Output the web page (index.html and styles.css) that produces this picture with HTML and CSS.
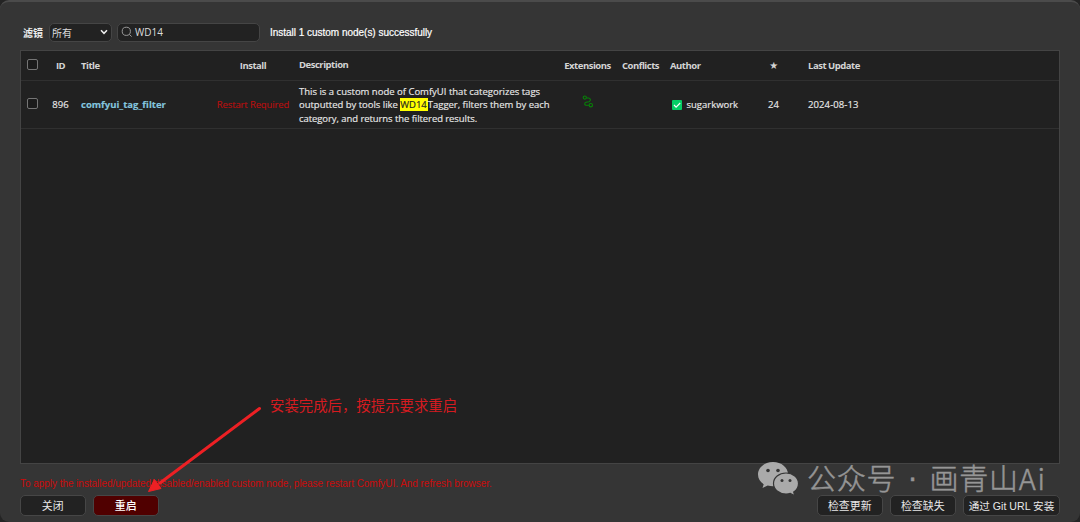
FILE: index.html
```html
<!DOCTYPE html>
<html lang="zh-CN">
<head>
<meta charset="utf-8">
<title>Custom Nodes Manager</title>
<link rel="stylesheet" href="styles.css">
</head>
<body>
<main class="dialog">
  <header class="toolbar">
    <label class="filter-label">滤镜</label>
    <div class="select"><span>所有</span><svg class="chevron" viewBox="0 0 8 6"><path d="M1 1.2 4 4.3 7 1.2"/></svg></div>
    <div class="search"><svg class="search-icon" viewBox="0 0 12 12"><circle cx="5.3" cy="5.3" r="4.1"/><path d="m8.3 8.3 2.3 2.3"/></svg><span>WD14</span></div>
    <div class="status">Install 1 custom node(s) successfully</div>
  </header>
  <section class="grid">
    <div class="row head">
      <div class="check"><i class="box"></i></div><div class="center">ID</div><div class="title">Title</div><div class="center">Install</div><div class="desc">Description</div><div class="center">Extensions</div><div class="center">Conflicts</div><div class="author-h">Author</div><div class="center star">★</div><div class="date">Last Update</div>
    </div>
    <div class="row item">
      <div class="check"><i class="box"></i></div><div class="center">896</div><div class="title link">comfyui_tag_filter</div><div class="center restart-req">Restart Required</div>
      <div class="desc"><p>This is a custom node of ComfyUI that categorizes tags</p><p class="mid">outputted by tools like <mark>WD14</mark>Tagger, filters them by each</p><p class="tight">category, and returns the filtered results.</p></div>
      <div class="center"><svg class="ext-icon" viewBox="0 0 12 13"><circle cx="2.8" cy="2.6" r="1.6"/><circle cx="8.8" cy="10.2" r="1.7"/><path d="M4.500 3h2.200c2 .3 2.300 2.900.3 3.700L4 7.300C2 8 2.500 10.400 4.300 10.300h2.600"/></svg></div>
      <div></div>
      <div class="author"><svg class="verified" viewBox="0 0 10 10"><rect width="10" height="10" rx="1"/><path d="m2 5 2.100 2.200L8.200 3"/></svg><span>sugarkwork</span></div>
      <div class="center">24</div><div class="date">2024-08-13</div>
    </div>
  </section>
  <div class="notice">To apply the installed/updated/disabled/enabled custom node, please restart ComfyUI. And refresh browser.</div>
  <footer class="actions">
    <button class="btn">关闭</button>
    <button class="btn danger">重启</button>
    <span class="spacer"></span>
    <button class="btn">检查更新</button>
    <button class="btn">检查缺失</button>
    <button class="btn git">通过 Git URL 安装</button>
  </footer>
</main>
<svg class="arrow" viewBox="0 0 116 90"><path class="shaft" d="M111.500 4.500 12 79"/><path class="tip" d="M.5 87.500 6.500 75.500 13 84.500Z"/></svg>
<div class="annotation">安装完成后，按提示要求重启</div>
<div class="watermark">
  <svg class="wechat" viewBox="0 0 42 34"><path d="M15 0C6.500 0 0 5.500 0 12.500c0 4 2.200 7.500 5.700 9.700L4.500 26l5.200-2.500c1.700.5 3.600.7 5.300.7C23.500 24.200 30 19 30 12.300S23.500 0 15 0Z"/><path class="front" d="M28 11c-7 0-12.500 4.600-12.500 10.500S21 32 28 32c1.500 0 3-.2 4.300-.6l4.400 2.300-1-3.700c3-1.900 4.800-5 4.800-8.500C40.500 15.600 35 11 28 11Z"/><g class="eyes"><circle cx="10" cy="8.500" r="1.800"/><circle cx="20" cy="8.500" r="1.800"/><circle cx="24" cy="18.500" r="1.500"/><circle cx="32" cy="18.500" r="1.500"/></g></svg>
  <span>公众号<b class="dot">·</b>画青山<b class="latin">Ai</b></span>
</div>
</body>
</html>
```

FILE: styles.css
```css
* { box-sizing: border-box; }
body { margin: 0; width: 1080px; height: 522px; overflow: hidden; background: #242424; font-family: "Liberation Sans", "Noto Sans CJK SC", sans-serif; font-size: 10px; color: #ddd; }
p { margin: 0; }
svg { display: block; flex: none; }
.dialog { height: 522px; padding: 22px 20px 0; border-top: 2px solid #4b4b4b; border-radius: 9px; background: #353535; }
.toolbar { display: flex; align-items: center; height: 20px; margin-top: -2px; white-space: nowrap; }
.filter-label { width: 29px; padding-left: 3px; color: #eee; font-weight: 700; }
.select, .search { display: flex; align-items: center; height: 19px; border: 1px solid #454545; border-radius: 5px; background: #222; }
.select { width: 63px; padding: 0 3px 0 2px; justify-content: space-between; }
.chevron { width: 8px; height: 6px; fill: none; stroke: #eee; stroke-width: 1.500; }
.search { width: 143px; margin-left: 5px; padding-left: 3px; gap: 2px; font: 10px "Open Sans", sans-serif; }
.search-icon { width: 12px; height: 12px; fill: none; stroke: #999; stroke-width: 1; }
.status { margin-left: 10px; color: #fff; letter-spacing: -.02px; -webkit-text-stroke: .2px #fff; }
.grid { height: 414px; margin-top: 8px; border: 1px solid #444; background: #212121; font-family: "Open Sans", "Noto Sans", sans-serif; font-size: 9.500px; color: #e8e8e8; }
.row { display: grid; grid-template-columns: 23px 33px 136px 80px 266px 57px 49px 102px 13px 1fr; align-items: center; border-bottom: 1px solid #303030; white-space: nowrap; }
.head { height: 30px; padding-bottom: 1px; font-weight: 700; color: #d4d4d4; letter-spacing: -.48px; }
.item { height: 48px; -webkit-text-stroke: .15px; }
.center { display: flex; justify-content: center; }
.check { padding-left: 6px; }
.head .check, .item .check { margin-top: -2px; }
.box { display: block; width: 11px; height: 11px; border: 1px solid #757575; border-radius: 2px; background: #1b1b1b; }
.title { padding-left: 4px; }
.link { font-weight: 700; color: #84c5df; }
.restart-req { color: #b80f0f; letter-spacing: -.13px; }
.desc { padding-left: 6px; line-height: 13.500px; }
.item .desc { padding-top: 1px; }
.mid { letter-spacing: -.02px; }
.tight { letter-spacing: -.07px; }
.desc mark { padding-right: 1px; color: #222; background: #ff0; }
.author-h { padding-left: 5px; }
.author { display: flex; align-items: center; gap: 4.500px; padding-left: 7px; }
.verified { width: 10px; height: 10px; fill: #04ce65; }
.verified path { fill: none; stroke: #fff; stroke-width: 1.100; }
.ext-icon { width: 12px; height: 13px; margin-top: -7px; fill: none; stroke: #078307; stroke-width: 1.100; }
.star { font-family: "DejaVu Sans", sans-serif; font-size: 10px; }
.date { padding-left: 28px; }
.item .date { letter-spacing: .1px; }
.notice { height: 16px; margin-top: 13px; line-height: 14px; color: #cb0b0b; letter-spacing: -.04px; white-space: nowrap; }
.actions { display: flex; gap: 7.500px; margin-top: 2px; }
.spacer { flex: 1; }
.btn { width: 65.500px; height: 21px; padding: 1px 0 0; border: 1px solid #464646; border-radius: 5px; background: #222; color: #e8e8e8; font: 10.900px/18px "Liberation Sans", "Noto Sans CJK SC", sans-serif; white-space: nowrap; }
.danger { background: #500000; color: #fff; font-weight: 500; }
.git { width: 97px; font-size: 10.600px; }
.arrow { position: absolute; left: 148px; top: 404px; width: 116px; height: 90px; }
.shaft { fill: none; stroke: #ed2024; stroke-width: 3; stroke-linecap: round; }
.tip { fill: #ed2024; stroke: #ed2024; stroke-width: 1; }
.annotation { position: absolute; left: 270px; top: 396px; font-size: 14.400px; line-height: 21px; color: #d51b20; white-space: nowrap; }
.watermark { position: absolute; left: 758px; top: 462px; display: flex; gap: 7px; color: #969696; white-space: nowrap; }
.watermark span { margin-top: -2px; font: 300 29px/34px "Noto Sans CJK SC", sans-serif; letter-spacing: .8px; -webkit-text-stroke: .5px #969696; }
.dot { display: inline-block; width: 33px; text-align: center; font-weight: 500; font-family: "Liberation Sans", sans-serif; position: relative; top: -3px; }
.latin { font-weight: 300; letter-spacing: 1.700px; }
.wechat { width: 42px; height: 34px; fill: #aaa; }
.front { stroke: #353535; stroke-width: 1.200; }
.eyes { fill: #353535; }
```
